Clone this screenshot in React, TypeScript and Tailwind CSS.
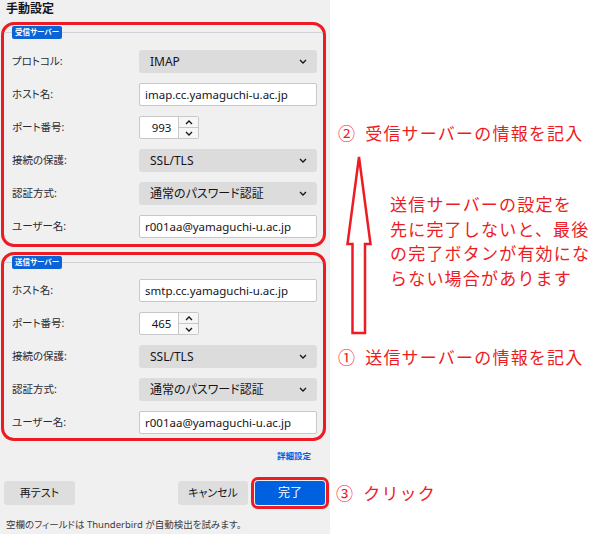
import React from "react";

const RED = "#ed1c24";
const PALT = { fontFeatureSettings: '"palt"' } as const;

function Chevron({ up = false }: { up?: boolean }) {
  return (
    <svg width="8" height="5" viewBox="0 0 8 5" className="shrink-0">
      <path
        d={up ? "M1 4 L4 1 L7 4" : "M1 1 L4 4 L7 1"}
        fill="none"
        stroke="#15141a"
        strokeWidth="1.3"
      />
    </svg>
  );
}

function Label({ children }: { children: React.ReactNode }) {
  return <div className="w-[127px] shrink-0 text-[10.5px] text-[#2b2a33]">{children}</div>;
}

function SelectBox({ value }: { value: string }) {
  return (
    <div className="flex h-[23px] flex-1 items-center justify-between rounded-[3px] bg-[#dcdcdc] pl-[11px] pr-[10px] text-[12px] text-[#15141a]">
      <span>{value}</span>
      <Chevron />
    </div>
  );
}

function TextBox({ value }: { value: string }) {
  return (
    <div className="flex h-[23px] flex-1 items-center rounded-[2px] border border-[#c8c8c8] bg-white pl-[5px] text-[11.5px] text-[#15141a]">
      {value}
    </div>
  );
}

function PortBox({ value }: { value: string }) {
  return (
    <div className="flex h-[23px] w-[60px] rounded-[2px] border border-[#c8c8c8] bg-white">
      <div className="flex w-[39px] items-center justify-end pr-[7px] text-[11.5px] text-[#15141a]">
        {value}
      </div>
      <div className="flex w-[20px] flex-col border-l border-[#c8c8c8] bg-[#f6f6f6]">
        <div className="flex flex-1 items-center justify-center border-b border-[#c8c8c8]">
          <Chevron up />
        </div>
        <div className="flex flex-1 items-center justify-center">
          <Chevron />
        </div>
      </div>
    </div>
  );
}

function Row({ label, children }: { label: string; children: React.ReactNode }) {
  return (
    <div className="flex h-[23px] items-center">
      <Label>{label}</Label>
      {children}
    </div>
  );
}

function ServerBox({
  title,
  headerHeight,
  bottomPad,
  children,
}: {
  title: string;
  headerHeight: string;
  bottomPad: string;
  children: React.ReactNode;
}) {
  return (
    <div className={`rounded-[13px] border-[3px] border-[#ed1c24] ${bottomPad}`}>
      <div className={`flex items-start ${headerHeight}`}>
        <div className="mt-[1px] flex h-[13px] w-full items-center">
          <span className="h-px w-[8px] bg-[#d2d2d8]" />
          <span className="flex h-[13px] items-center rounded-[2px] bg-[#0a64d8] px-[3px] text-[7.5px] font-bold text-white">
            {title}
          </span>
          <span className="h-px flex-1 bg-[#d2d2d8]" />
        </div>
      </div>
      <div className="flex flex-col gap-[10px] pl-[8px] pr-[6px]">{children}</div>
    </div>
  );
}

function UpArrow() {
  return (
    <svg width="26" height="181" viewBox="0 0 26 181" className="shrink-0">
      <path
        d="M13 2 L1.5 89 L6.5 89 L6.5 178 L19 178 L19 89 L24.5 89 Z"
        fill="white"
        stroke={RED}
        strokeWidth="2.5"
        strokeLinejoin="miter"
      />
    </svg>
  );
}

function Step({ n, text }: { n: string; text: string }) {
  return (
    <div className="flex whitespace-nowrap">
      <span className="mr-[9px]">{n}</span>
      <span>{text}</span>
    </div>
  );
}

export default function App() {
  return (
    <div
      className="flex h-[534px] w-[600px] overflow-hidden bg-white"
      style={{ fontFamily: '"Noto Sans", "Noto Sans CJK JP", sans-serif' }}
    >
      {/* Thunderbird manual setup panel */}
      <div className="flex h-full w-[330px] shrink-0 flex-col bg-[#f0f0f0]" style={PALT}>
        <div className="h-[22px] pl-[6px] text-[12px] font-bold leading-[18px] text-[#15141a]">
          手動設定
        </div>

        <div className="pl-[1px] pr-[4px]">
          <ServerBox title="受信サーバー" headerHeight="h-[25px]" bottomPad="pb-[6px]">
            <Row label="プロトコル:">
              <SelectBox value="IMAP" />
            </Row>
            <Row label="ホスト名:">
              <TextBox value="imap.cc.yamaguchi-u.ac.jp" />
            </Row>
            <Row label="ポート番号:">
              <PortBox value="993" />
            </Row>
            <Row label="接続の保護:">
              <SelectBox value="SSL/TLS" />
            </Row>
            <Row label="認証方式:">
              <SelectBox value="通常のパスワード認証" />
            </Row>
            <Row label="ユーザー名:">
              <TextBox value="r001aa@yamaguchi-u.ac.jp" />
            </Row>
          </ServerBox>

          <div className="h-[5px]" />

          <ServerBox title="送信サーバー" headerHeight="h-[24px]" bottomPad="pb-[4px]">
            <Row label="ホスト名:">
              <TextBox value="smtp.cc.yamaguchi-u.ac.jp" />
            </Row>
            <Row label="ポート番号:">
              <PortBox value="465" />
            </Row>
            <Row label="接続の保護:">
              <SelectBox value="SSL/TLS" />
            </Row>
            <Row label="認証方式:">
              <SelectBox value="通常のパスワード認証" />
            </Row>
            <Row label="ユーザー名:">
              <TextBox value="r001aa@yamaguchi-u.ac.jp" />
            </Row>
          </ServerBox>
        </div>

        <div className="flex h-[30px] items-center justify-end pr-[19px] text-[8.5px] font-bold text-[#0061e0]">
          詳細設定
        </div>

        <div className="mt-[6px] flex h-[32px] items-center justify-between pl-[4px] pr-[1px]">
          <button
            className="h-[24px] w-[71px] rounded-[3px] bg-[#dedede] text-[11px] text-[#15141a]"
            style={PALT}
          >
            再テスト
          </button>
          <div className="flex items-center gap-[3px]">
            <button
              className="h-[24px] w-[70px] rounded-[3px] bg-[#dedede] text-[11px] text-[#15141a]"
              style={PALT}
            >
              キャンセル
            </button>
            <div className="rounded-[7px] border-[3px] border-[#ed1c24] p-[1px]">
              <button
                className="block h-[24px] w-[70px] rounded-[3px] bg-[#0061e0] text-[12px] text-white"
                style={PALT}
              >
                完了
              </button>
            </div>
          </div>
        </div>

        <div className="mt-[8px] h-[16px] pl-[6px] text-[9.5px] leading-[16px] text-[#3a3a3a]">
          空欄のフィールドは Thunderbird が自動検出を試みます。
        </div>
      </div>

      {/* Annotations */}
      <div
        className="flex flex-1 flex-col pl-[8px] pt-[121px] text-[17px] leading-[24px] tracking-[1.2px] text-[#ed1c24]"
        style={{ fontFamily: '"Noto Sans CJK JP", sans-serif' }}
      >
        <Step n="②" text="受信サーバーの情報を記入" />
        <div className="mt-[10px] flex">
          <div className="ml-[8px]">
            <UpArrow />
          </div>
          <div className="ml-[18px] mt-[37px] leading-[24.5px]">
            送信サーバーの設定を
            <br />
            先に完了しないと、最後
            <br />
            の完了ボタンが有効にな
            <br />
            らない場合があります
          </div>
        </div>
        <div className="mt-[9px]">
          <Step n="①" text="送信サーバーの情報を記入" />
        </div>
        <div className="-ml-[2px] mt-[112px]">
          <Step n="③" text="クリック" />
        </div>
      </div>
    </div>
  );
}
